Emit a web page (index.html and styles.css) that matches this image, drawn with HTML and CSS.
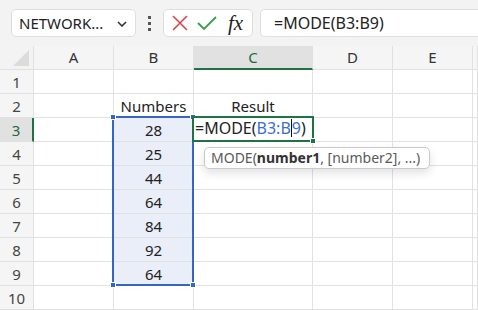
FILE: index.html
```html
<!DOCTYPE html>
<html lang="en">
<head>
    <meta charset="UTF-8">
    <title>MODE formula</title>
    <link rel="stylesheet" href="styles.css">
</head>
<body>
    <div class="toolbar">
        <div class="namebox">
            <span class="name">NETWORK...</span>
            <svg class="chev" width="10" height="6" viewBox="0 0 10 6"><path d="M1 1 L5 5 L9 1" fill="none" stroke="#333" stroke-width="1.6"/></svg>
        </div>
        <div class="dots"><i></i><i></i><i></i></div>
        <div class="fbuttons">
            <svg width="18" height="18" viewBox="0 0 18 18"><path d="M2 2 L16 16 M16 2 L2 16" stroke="#e04545" stroke-width="1.6"/></svg>
            <svg width="22" height="18" viewBox="0 0 22 18"><path d="M2 9 L8 15 L20 3" fill="none" stroke="#3d9b4e" stroke-width="1.8"/></svg>
            <span class="fx">fx</span>
        </div>
        <div class="formula">=MODE(B3:B9)</div>
    </div>

    <div class="sheet">
        <div class="grid">
            <div class="corner"><svg width="18" height="18" viewBox="0 0 18 18"><path d="M17 1 L17 17 L1 17 Z" fill="#dcdcdc"/></svg></div>
            <div class="col">A</div><div class="col">B</div><div class="col active">C</div><div class="col">D</div><div class="col">E</div><div class="col"></div>

            <div class="row">1</div><div></div><div></div><div></div><div></div><div></div><div></div>
            <div class="row">2</div><div></div><div class="c">Numbers</div><div class="c">Result</div><div></div><div></div><div></div>
            <div class="row active">3</div><div></div><div class="c sel">28</div><div></div><div></div><div></div><div></div>
            <div class="row">4</div><div></div><div class="c sel">25</div><div></div><div></div><div></div><div></div>
            <div class="row">5</div><div></div><div class="c sel">44</div><div></div><div></div><div></div><div></div>
            <div class="row">6</div><div></div><div class="c sel">64</div><div></div><div></div><div></div><div></div>
            <div class="row">7</div><div></div><div class="c sel">84</div><div></div><div></div><div></div><div></div>
            <div class="row">8</div><div></div><div class="c sel">92</div><div></div><div></div><div></div><div></div>
            <div class="row">9</div><div></div><div class="c sel">64</div><div></div><div></div><div></div><div></div>
            <div class="row">10</div><div></div><div></div><div></div><div></div><div></div><div></div>
        </div>

        <!-- overlays: range highlight, edited cell, tooltip -->
        <div class="range">
            <i class="h tl"></i><i class="h tr"></i><i class="h bl"></i><i class="h br"></i>
        </div>
        <div class="editcell">=MODE(<span class="ref">B3:B<span class="caret"></span>9</span>)<i class="fill"></i></div>
        <div class="tip">MODE(<b>number1</b>, [number2], ...)</div>
    </div>
</body>
</html>
```

FILE: styles.css
```css
* {
    box-sizing: border-box;
}
body {
    margin: 0;
    width: 478px;
    height: 310px;
    overflow: hidden;
    background: #ffffff;
    font-family: "Noto Sans", "Open Sans", sans-serif;
    color: #222;
}
.toolbar {
    height: 46px;
    background: #f3f3f3;
    display: flex;
    align-items: flex-start;
    padding: 9px 0 0 11px;
}
.namebox {
    width: 125px;
    height: 28px;
    background: #fff;
    border: 1px solid #dedede;
    border-radius: 5px;
    display: flex;
    align-items: center;
    justify-content: space-between;
    padding: 0 8px 0 7px;
    font-size: 15px;
}
.chev {
    margin-top: 2px;
}
.dots {
    width: 27px;
    height: 28px;
    display: flex;
    flex-direction: column;
    align-items: center;
    justify-content: center;
    gap: 3px;
}
.dots i {
    display: block;
    width: 3px;
    height: 3px;
    background: #555;
}
.fbuttons {
    width: 90px;
    height: 28px;
    background: #fff;
    border: 1px solid #dedede;
    border-radius: 5px;
    display: flex;
    align-items: center;
    gap: 7px;
    padding-left: 7px;
}
.fx {
    font-family: "Liberation Serif", "DejaVu Serif", serif;
    font-style: italic;
    font-size: 21px;
    line-height: 24px;
    color: #222;
    margin-left: 3px;
}
.formula {
    flex: 1;
    height: 28px;
    margin-left: 7px;
    background: #fff;
    border: 1px solid #dedede;
    border-right: none;
    border-radius: 5px 0 0 5px;
    padding-left: 13px;
    font-size: 16px;
    line-height: 26px;
}
.sheet {
    position: relative;
}
.grid {
    display: grid;
    grid-template-columns: 34px 80px 80px 119px 80px 80px 5px;
    grid-template-rows: repeat(11, 24px);
    font-size: 15px;
}
.grid > div {
    border-right: 1px solid #e1e1e1;
    border-bottom: 1px solid #e1e1e1;
}
.corner {
    background: #f3f3f3;
    display: flex;
    align-items: flex-end;
    justify-content: flex-end;
    padding: 0 3px 2px 0;
}
.col {
    background: #f5f5f5;
    text-align: center;
    line-height: 23px;
    color: #333;
}
.col.active {
    background: #e1e1e1;
    color: #1c6a3f;
    border-bottom: 2px solid #1f7244 !important;
}
.row {
    background: #f5f5f5;
    text-align: center;
    line-height: 24px;
    color: #444;
}
.row.active {
    background: #e1e1e1;
    color: #1c6a3f;
    border-right: 2px solid #1f7244 !important;
}
.c {
    text-align: center;
    line-height: 24px;
}
.sel {
    background: #e9eef8;
}
.range {
    position: absolute;
    left: 112px;
    top: 70px;
    width: 82px;
    height: 170px;
    border: 2px solid #3566c6;
}
.h {
    position: absolute;
    width: 6px;
    height: 6px;
    background: #3566c6;
    border: 1px solid #fff;
}
.tl { left: -4px; top: -4px; }
.tr { right: -4px; top: -4px; }
.bl { left: -4px; bottom: -4px; }
.br { right: -4px; bottom: -4px; }
.editcell {
    position: absolute;
    left: 192px;
    top: 70px;
    width: 122px;
    height: 26px;
    border: 2px solid #1f7244;
    background: #fff;
    font-size: 16px;
    line-height: 21px;
    padding-left: 1px;
    white-space: nowrap;
}
.ref {
    color: #3b6fd0;
}
.caret {
    display: inline-block;
    width: 1px;
    height: 18px;
    background: #111;
    vertical-align: -3px;
}
.fill {
    position: absolute;
    right: -4px;
    bottom: -4px;
    width: 6px;
    height: 6px;
    background: #1f7244;
    border: 1px solid #fff;
}
.tip {
    position: absolute;
    left: 204px;
    top: 101px;
    width: 226px;
    height: 22px;
    background: #fff;
    border: 1px solid #cacaca;
    border-radius: 5px;
    box-shadow: 0 4px 10px rgba(0, 0, 0, 0.12);
    font-size: 14px;
    line-height: 20px;
    padding-left: 6px;
    color: #5a5a5a;
    white-space: nowrap;
}
.tip b {
    color: #333;
}
```
